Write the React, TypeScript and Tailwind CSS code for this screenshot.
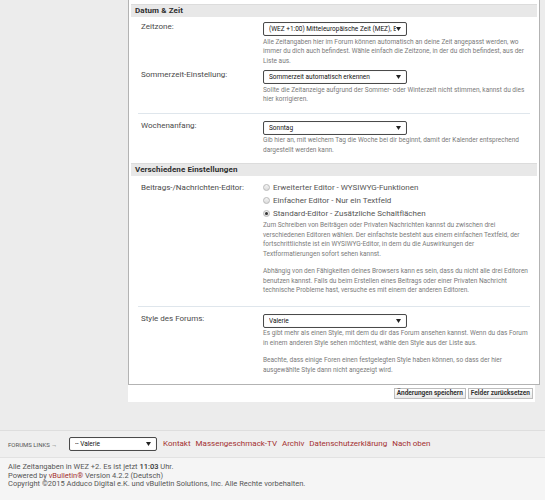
import React from "react";

const Arrow = () => (
  <svg width="5" height="4" viewBox="0 0 5 4" className="shrink-0">
    <path d="M0 0 L5 0 L2.5 4 Z" fill="#222" />
  </svg>
);

function Select({ text, w = "w-[144px]" }: { text: string; w?: string }) {
  return (
    <div
      className={`${w} h-[14px] border border-[#4a4a4a] rounded-[2px] bg-white flex items-center pl-[5px] pr-[5px] shadow-[inset_0_0_1px_rgba(0,0,0,0.2)]`}
    >
      <span className="flex-1 overflow-hidden whitespace-nowrap text-[6.5px] leading-[10px] text-[#111]">
        {text}
      </span>
      <Arrow />
    </div>
  );
}

function Desc({ paras }: { paras: string[][] }) {
  return (
    <div className="mt-[1.5px] text-[6.5px] leading-[9.5px] text-[#7a7a7a] whitespace-nowrap">
      {paras.map((lines, i) => (
        <div key={i} className={i > 0 ? "mt-[8px]" : ""}>
          {lines.map((l, j) => (
            <div key={j}>{l}</div>
          ))}
        </div>
      ))}
    </div>
  );
}

function Row({
  label,
  children,
  className = "",
  sep = false,
  labelClass = "leading-[9px]",
}: {
  label: string;
  children: React.ReactNode;
  className?: string;
  sep?: boolean;
  labelClass?: string;
}) {
  return (
    <div className={`mx-[9px] flex ${sep ? "border-t border-[#dfe6ec]" : ""} ${className}`}>
      <div className={`w-[125px] shrink-0 pl-[3px] text-[8px] text-[#4a4a4a] ${labelClass}`}>
        {label}
      </div>
      <div className="flex-1">{children}</div>
    </div>
  );
}

function Radio({ checked, label }: { checked?: boolean; label: string }) {
  return (
    <div className="h-[13px] flex items-center gap-[3px]">
      <span className="w-[7px] h-[7px] rounded-full border border-[#b9b9b9] bg-gradient-to-b from-[#f4f4f4] to-[#dcdcdc] flex items-center justify-center">
        {checked && <span className="w-[3px] h-[3px] rounded-full bg-[#333]" />}
      </span>
      <span className="text-[8px] font-normal text-[#555] leading-[13px]">{label}</span>
    </div>
  );
}

function Header({ title }: { title: string }) {
  return (
    <div className="mx-[2px] h-[13px] bg-[#e8e8e8] border-t border-[#dcdcdc] flex items-center pl-[4px]">
      <span className="text-[8px] font-bold text-[#2e2e2e] tracking-[0.1px]">{title}</span>
    </div>
  );
}

function Btn({ label }: { label: string }) {
  return (
    <div className="h-[11px] px-[2px] border border-[#bdbdbd] bg-gradient-to-b from-[#ffffff] to-[#e9e9e9] flex items-center text-[6.5px] font-bold text-[#333] leading-none">
      {label}
    </div>
  );
}

export default function App() {
  return (
    <div className="min-h-[500px] bg-[#ececec] font-['Roboto',sans-serif] flex flex-col">
      <div className="ml-[128px] w-[412px]">
        <div className="bg-white border-x border-b border-[#b3b3b3] pt-[4px] pb-[9px]">
          <Header title="Datum & Zeit" />
          <Row label="Zeitzone:" className="pt-[5px]">
            <Select text="(WEZ +1:00) Mitteleuropäische Zeit (MEZ), Europa/Berlin" />
            <Desc
              paras={[
                [
                  "Alle Zeitangaben hier im Forum können automatisch an deine Zeit angepasst werden, wo",
                  "immer du dich auch befindest. Wähle einfach die Zeitzone, in der du dich befindest, aus der",
                  "Liste aus.",
                ],
              ]}
            />
          </Row>
          <Row label="Sommerzeit-Einstellung:" className="pt-[4px] pb-[8px]">
            <Select text="Sommerzeit automatisch erkennen" />
            <Desc
              paras={[
                [
                  "Sollte die Zeitanzeige aufgrund der Sommer- oder Winterzeit nicht stimmen, kannst du dies",
                  "hier korrigieren.",
                ],
              ]}
            />
          </Row>
          <Row label="Wochenanfang:" sep className="pt-[7px] pb-[8px]">
            <Select text="Sonntag" />
            <Desc
              paras={[
                [
                  "Gib hier an, mit welchem Tag die Woche bei dir beginnt, damit der Kalender entsprechend",
                  "dargestellt werden kann.",
                ],
              ]}
            />
          </Row>
          <Header title="Verschiedene Einstellungen" />
          <Row
            label="Beitrags-/Nachrichten-Editor:"
            className="pt-[4.5px] pb-[10px]"
            labelClass="leading-[13px]"
          >
            <Radio label="Erweiterter Editor - WYSIWYG-Funktionen" />
            <Radio label="Einfacher Editor - Nur ein Textfeld" />
            <Radio checked label="Standard-Editor - Zusätzliche Schaltflächen" />
            <Desc
              paras={[
                [
                  "Zum Schreiben von Beiträgen oder Privaten Nachrichten kannst du zwischen drei",
                  "verschiedenen Editoren wählen. Der einfachste besteht aus einem einfachen Textfeld, der",
                  "fortschrittlichste ist ein WYSIWYG-Editor, in dem du die Auswirkungen der",
                  "Textformatierungen sofort sehen kannst.",
                ],
                [
                  "Abhängig von den Fähigkeiten deines Browsers kann es sein, dass du nicht alle drei Editoren",
                  "benutzen kannst. Falls du beim Erstellen eines Beitrags oder einer Privaten Nachricht",
                  "technische Probleme hast, versuche es mit einem der anderen Editoren.",
                ],
              ]}
            />
          </Row>
          <Row label="Style des Forums:" sep className="pt-[7px]">
            <Select text="Valerie" />
            <Desc
              paras={[
                [
                  "Es gibt mehr als einen Style, mit dem du dir das Forum ansehen kannst. Wenn du das Forum",
                  "in einem anderen Style sehen möchtest, wähle den Style aus der Liste aus.",
                ],
                [
                  "Beachte, dass einige Foren einen festgelegten Style haben können, so dass der hier",
                  "ausgewählte Style dann nicht angezeigt wird.",
                ],
              ]}
            />
          </Row>
        </div>
        <div className="w-[407px] bg-white flex justify-end gap-[2px] pt-[3px] pb-[3px] pr-[2px]">
          <Btn label="Änderungen speichern" />
          <Btn label="Felder zurücksetzen" />
        </div>
      </div>

      <div className="h-[28px]" />

      <div className="h-[27px] border-t border-[#dedede] bg-[#efefef] flex items-center pl-[8px]">
        <span className="text-[6px] text-[#555] uppercase w-[61px]">Forums Links →</span>
        <Select text="-- Valerie" w="w-[88px]" />
        <div className="flex items-center gap-[5px] ml-[6px] text-[8px] text-[#a3302f]">
          <span>Kontakt</span>
          <span>Massengeschmack-TV</span>
          <span>Archiv</span>
          <span>Datenschutzerklärung</span>
          <span>Nach oben</span>
        </div>
      </div>

      <div className="flex-1 border-t border-[#e2e2e2] bg-[#f5f5f5] pl-[8px] pt-[5px] text-[7.5px] leading-[8.6px] text-[#555]">
        <div>
          Alle Zeitangaben in WEZ +2. Es ist jetzt <span className="font-medium text-[#333]">11:03</span> Uhr.
        </div>
        <div>
          Powered by <span className="text-[#a3302f]">vBulletin®</span> Version 4.2.2 (Deutsch)
        </div>
        <div>Copyright ©2015 Adduco Digital e.K. und vBulletin Solutions, Inc. Alle Rechte vorbehalten.</div>
      </div>
    </div>
  );
}
